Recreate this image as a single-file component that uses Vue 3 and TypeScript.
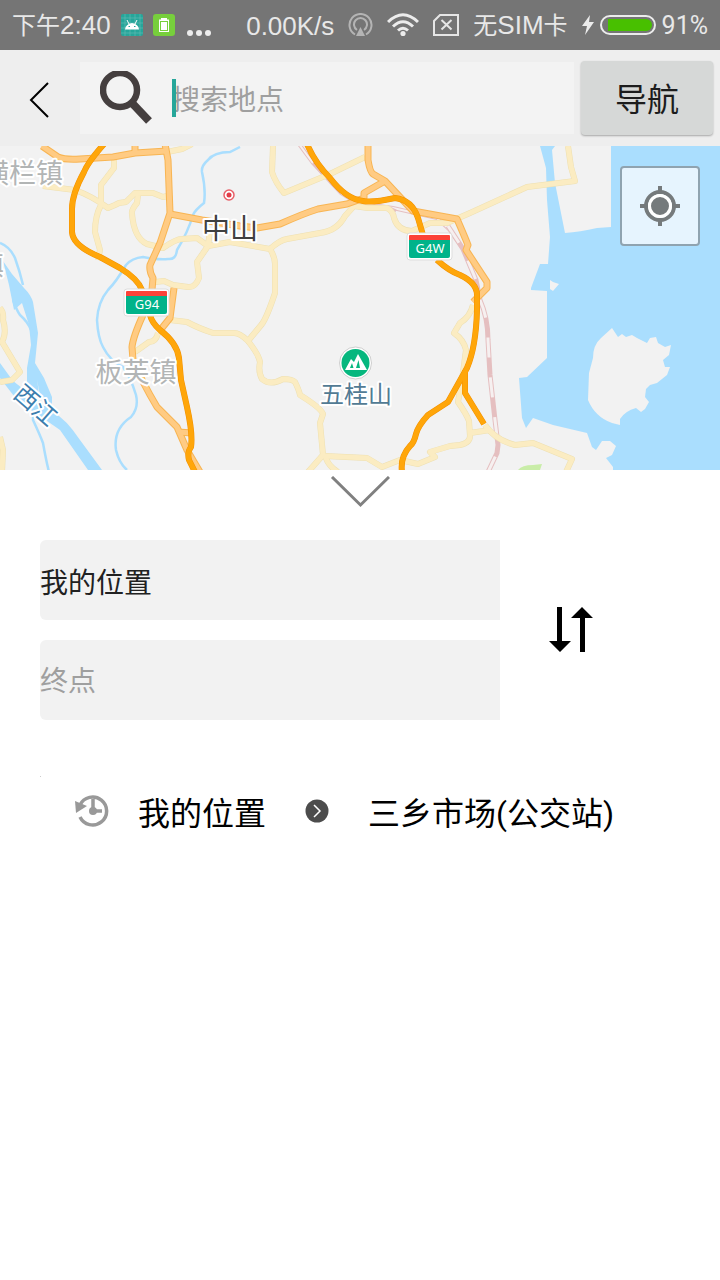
<script setup lang="ts">
import { ref } from 'vue'

interface Trip {
  from: string
  to: string
}

const query = ref('')
const origin = ref('我的位置')
const destination = ref('')
const trips = ref<Trip[]>([{ from: '我的位置', to: '三乡市场(公交站)' }])

function swapEnds(): void {
  const previous = origin.value
  origin.value = destination.value
  destination.value = previous
}

const rivers: string[] = [
  'M240 147L230 152Q214 152 208 160Q201 166 202 172Q206 190 204 203Q195 210 193 215Q188 232 177 250Q176 260 168 259Q158 260 143 257Q132 258 126 265Q116 282 108 290Q98 302 97 320Q98 338 103 347Q110 361 123 367Q131 378 136 395Q139 408 131 417Q113 429 116 450Q119 463 127 470',
  'M0 243Q10 247 15 258Q20 272 23 285',
  'M13 300Q17 311 20 315Q28 322 31 330',
  'M33 405L33 420Q40 435 43 443Q46 460 49 472',
]

const yellowRoads: string[] = [
  'M43 186L75 190Q92 196 108 208L115 205L119 203L126 202L135 193L153 193L163 197L172 195',
  'M114 158L114 168L101 185L101 205Q95 216 95 232L100 250L98 260',
  'M138 195L137 203Q131 210 132 214Q134 238 147 244L163 248Q176 239 182 239L197 238L208 246L230 242L270 249Q280 240 287 239L320 233Q337 231 345 216L354 206L368 208L387 208Q393 211 394 218Q398 231 412 231L430 223L447 223L470 213L527 187L575 181L571 167L568 146',
  'M210 230L208 246L197 262L199 278Q195 288 188 287L173 285L164 281L155 282',
  'M167 152L182 149L192 144',
  'M273 146L272 172Q275 182 284 193L330 174L365 157',
  'M270 249Q275 257 275 264L275 293Q267 317 262 324L248 341Q240 333 234 333L213 333Q198 328 187 322L170 320',
  'M248 341Q259 355 260 362Q258 372 262 379Q270 386 283 379Q292 379 295 382Q299 390 300 395Q321 408 323 414L320 423L323 455L308 472',
  'M325 455Q327 465 338 472',
  'M325 456L367 458L382 467L400 460L418 464L435 457L430 452L450 446L460 445Q470 443 470 436L469 421Q467 415 458 402L463 373L466 350Q464 340 454 333L460 323Q470 317 473 305',
  'M470 433L490 430',
  'M485 425Q495 440 515 445L533 443L572 459L566 472',
  'M0 308Q4 312 3 320Q7 333 2 342L20 372L12 380L0 382',
  'M0 437L3 450L2 472',
  'M158 333Q156 342 149 342L135 352',
]

const orangeRoads: string[] = [
  'M42 146L58 157Q65 160 80 159L113 157L135 153L167 151',
  'M135 144L135 153',
  'M165 144L168 160L170 213L160 243L150 265Q149 271 153 278L152 290',
  'M170 214L202 220L240 226L257 228L280 224Q305 213 318 209L347 204L364 198L364 193L385 181',
  'M368 144L368 160Q370 172 373 174L385 181L413 211L457 219Q464 235 468 245L466 250L487 282L487 288L473 302',
  'M174 288L170 318L162 328',
  'M143 315Q133 337 132 347L133 360Q142 382 157 407L177 427L187 450L200 472',
  'M178 432L192 433',
]

const highways: string[] = [
  'M104 144Q88 162 84 172Q72 194 72 209L72 232Q73 246 100 257L120 268Q138 279 142 290',
  'M150 315Q152 323 160 330Q177 343 179 358L181 380L187 407Q193 434 191 447Q187 452 189 460L195 472',
  'M307 144Q315 163 330 178Q346 199 363 201Q372 203 395 198Q412 200 418 218L423 235',
  'M437 260Q449 271 460 275Q477 283 477 295L477 310Q476 347 467 368L448 402Q431 413 428 415Q418 426 416 434Q414 443 410 446Q400 457 402 472',
  'M465 370L465 393L484 424',
]

const sea =
  'M540 146L543 157L546 168L547 200L550 237L548 264L540 264L531 288L531 290L547 291L547 358L527 377L519 378L522 418L526 428L533 418L553 425L587 433L592 447L596 450L602 441L610 441L616 446L612 455L606 458L613 467L613 470L900 470V0H540ZM611 146V227L597 228Q580 232 565 233L555 183L552 150L555 146V0H611Z'
const island =
  'M612 328L618 337L622 334L626 337L632 335L637 338L647 343L650 338L656 337L658 343L665 347L671 345L669 355L663 360L665 367L670 367L667 375L657 383L650 385L646 389L645 397L649 402L645 409L641 412L636 408Q625 411 620 419V425L612 423Q595 417 588 400L589 373L593 358Q593 345 601 338Z'
</script>

<template>
  <div class="app">
    <header class="status">
      <div class="status-group status-left">
        <span class="status-text"><span class="han">下午</span>2:40</span>
        <svg width="22" height="22" viewBox="0 0 22 22" aria-hidden="true">
          <rect width="22" height="22" rx="2" fill="#26a69a" />
          <path d="M4 0V22M9 0V22M14 0V22M19 0V22M0 4H22M0 9H22M0 14H22M0 19H22" stroke="#68bdb5" stroke-width=".6" />
          <path d="M4 15.500Q4.500 10 11 9Q17.500 10 18 15.500Z" fill="#fff" />
          <path d="M6 6L8 10M16 6L14 10" stroke="#fff" />
          <path d="M7.500 12.500H9M13 12.500H14.500" stroke="#26a69a" />
        </svg>
        <svg width="22" height="22" viewBox="0 0 22 22" aria-hidden="true">
          <rect width="22" height="22" rx="3" fill="#77cf3c" />
          <path d="M8 4H14V5.500H16V18H6V5.500H8Z" fill="#fff" />
          <rect x="7.500" y="7.500" width="7" height="9" fill="#fff" stroke="#77cf3c" />
        </svg>
        <svg class="more" width="24" height="22" viewBox="0 0 24 22" fill="#ececec" aria-hidden="true">
          <circle cx="3" cy="19" r="3" /><circle cx="12" cy="19" r="3" /><circle cx="21" cy="19" r="3" />
        </svg>
      </div>
      <div class="status-group status-right">
        <span class="status-text">0.00K/s</span>
        <svg width="25" height="24" viewBox="0 0 25 24" fill="none" stroke="#b4b4b4" stroke-width="2" aria-hidden="true">
          <path d="M7 21.500A11 11 0 1 1 18 21.500M9 17A6.500 6.500 0 1 1 16 17" />
          <path d="M12.500 14L17 23H8Z" fill="#b4b4b4" stroke="none" />
        </svg>
        <svg width="32" height="24" viewBox="0 0 32 24" fill="none" stroke="#ececec" stroke-width="3" aria-hidden="true">
          <path d="M1 9Q16 -5.500 31 9M6 13.500Q16 4 26 13.500M11 17.500Q16 13 21 17.500" />
          <circle cx="16" cy="20.500" r="2.600" fill="#ececec" stroke="none" />
        </svg>
        <svg width="26" height="22" viewBox="0 0 26 22" fill="none" stroke="#e6e6e6" stroke-width="2" aria-hidden="true">
          <path d="M7 1H25V21H1V7ZM8.500 6L18.500 15.500M18.500 6L8.500 15.500" />
        </svg>
        <span class="status-text"><span class="han">无</span>SIM<span class="han">卡</span></span>
        <div class="power">
          <svg width="12" height="20" viewBox="0 0 12 20" aria-hidden="true">
            <path d="M8 0L0 11H5L3 20L12 7H7Z" fill="#ececec" />
          </svg>
          <svg width="56" height="20" viewBox="0 0 56 20" aria-hidden="true">
            <rect x="1" y="1" width="54" height="18" rx="9" fill="none" stroke="#ececec" stroke-width="2" />
            <path d="M8 4H46A6 6 0 0 1 46 16H8Z" fill="#48c000" />
          </svg>
          <span class="percent">91%</span>
        </div>
      </div>
    </header>

    <form class="toolbar" @submit.prevent>
      <button class="back" type="button" aria-label="返回">
        <svg width="22" height="36" viewBox="0 0 22 36" fill="none" stroke="#000" stroke-width="2" aria-hidden="true">
          <path d="M19 1L2 18L19 35" />
        </svg>
      </button>
      <label class="search">
        <svg class="search-icon" width="52" height="55" viewBox="0 0 52 55" fill="none" stroke="#453f3f" aria-hidden="true">
          <circle cx="20" cy="19" r="17" stroke-width="6.500" />
          <path d="M32 32L49 50" stroke-width="8" />
        </svg>
        <input v-model="query" type="text" placeholder="搜索地点" aria-label="搜索地点" />
        <span class="caret"></span>
      </label>
      <button class="navigate" type="submit">导航</button>
    </form>

    <section class="map" aria-label="地图">
      <svg class="map-canvas" viewBox="0 146 720 324" preserveAspectRatio="xMidYMid slice">
        <rect y="146" width="720" height="324" fill="#f2f2f2" />
        <g fill="#aadefe">
          <path :d="sea" />
          <path d="M3 261L12 274L24 288Q31 295 33 302L38 333L35 363L44 378L52 397V404L40 395L37 380Q41 399 35 410L27 394L27 368L31 345L29 325L22 303L14 310L9 285Z" />
          <path d="M0 363L13 381L53 412Q66 419 80 440L102 470H88L60 430L17 400L0 378Z" />
        </g>
        <g fill="none" stroke="#aadefe" stroke-width="2.500">
          <path v-for="d in rivers" :key="d" :d="d" />
        </g>
        <path :d="island" fill="#f2f2f2" />
        <path d="M550 280L553 282L559 284L553 291L550 289Z" fill="#f2f2f2" />
        <path d="M518 470Q522 465 533 465L542 464L540 470Z" fill="#c9eda8" />

        <g fill="none">
          <path class="rail-edge thin" d="M299 144L313 163L341 193L357 203L393 208L437 218L450 230L463 249" />
          <path class="rail-core thin" d="M299 144L313 163L341 193L357 203L393 208L437 218L450 230L463 249" />
          <path d="M313 163L341 193M390 208L396 211" stroke="#e5bfc0" stroke-width="3" />
          <path class="rail-edge" d="M448 226L463 249L476 280L480 300Q488 318 488 340L490 375L495 420L498 445L497 453L488 472" />
          <path class="rail-core" d="M448 226L463 249L476 280L480 300Q488 318 488 340L490 375L495 420L498 445L497 453L488 472" />
        </g>
        <g class="roads yellow">
          <g class="casing"><path v-for="d in yellowRoads" :key="d" :d="d" /></g>
          <g class="surface"><path v-for="d in yellowRoads" :key="d" :d="d" /></g>
        </g>
        <g class="roads orange">
          <g class="casing"><path v-for="d in orangeRoads" :key="d" :d="d" /></g>
          <g class="surface"><path v-for="d in orangeRoads" :key="d" :d="d" /></g>
        </g>
        <g class="roads highway">
          <g class="casing"><path v-for="d in highways" :key="d" :d="d" /></g>
          <g class="surface"><path v-for="d in highways" :key="d" :d="d" /></g>
        </g>

        <g>
          <rect x="124" y="289" width="45" height="27" rx="3" fill="#fff" stroke="#ddd" />
          <path d="M126 297V292Q126 291 127 291H166Q167 291 167 292V297Z" fill="#fc4238" />
          <path d="M126 296H167V312Q167 314 165 314H128Q126 314 126 312Z" fill="#00b38a" />
          <text class="shield" x="147" y="309">G94</text>
          <rect x="407" y="233" width="45" height="27" rx="3" fill="#fff" stroke="#ddd" />
          <path d="M409 241V236Q409 235 410 235H449Q450 235 450 236V241Z" fill="#fc4238" />
          <path d="M409 240H450V256Q450 258 448 258H411Q409 258 409 256Z" fill="#00b38a" />
          <text class="shield" x="430" y="253">G4W</text>
        </g>
        <circle cx="229" cy="195" r="5" fill="#fff" stroke="#e85f68" stroke-width="1.500" />
        <circle cx="229" cy="195" r="2.500" fill="#e23c48" />
        <circle cx="355.500" cy="363" r="16" fill="#fff" stroke="#bbb" stroke-width=".7" />
        <circle cx="355.500" cy="363" r="14" fill="#06b77e" />
        <path d="M345 370L351 359L354 362L358 354L367 370Z" fill="#fff" />
        <path d="M352 363L353.500 368H350ZM358.500 360L360 368H356Z" fill="#06b77e" />

        <g class="place">
          <text class="town" x="63" y="183" text-anchor="end">横栏镇</text>
          <text class="town" x="4" y="275" text-anchor="end">镇</text>
          <text class="town" x="136" y="382" text-anchor="middle">板芙镇</text>
          <text class="city" x="230" y="239" text-anchor="middle">中山</text>
          <text class="scenic" x="356" y="403" text-anchor="middle">五桂山</text>
          <text class="river" transform="translate(36 405) rotate(41)" y="9" text-anchor="middle">西江</text>
        </g>
      </svg>
      <button class="locate" type="button" aria-label="定位">
        <svg width="40" height="40" viewBox="0 0 40 40" fill="none" stroke="#757a7c" stroke-width="4" aria-hidden="true">
          <path d="M20 0V6M20 34V40M0 20H6M34 20H40" />
          <circle cx="20" cy="20" r="14" />
          <circle cx="20" cy="20" r="10.500" fill="#757a7c" stroke="#fff" stroke-width="3" />
        </svg>
      </button>
    </section>

    <main class="panel">
      <button class="collapse" type="button" aria-label="收起">
        <svg width="60" height="34" viewBox="0 0 60 34" fill="none" stroke="#808080" stroke-width="3" aria-hidden="true">
          <path d="M2 1L30.500 29L59 1" />
        </svg>
      </button>

      <form class="route" @submit.prevent>
        <div class="ends">
          <input v-model="origin" type="text" placeholder="起点" aria-label="起点" />
          <input v-model="destination" type="text" placeholder="终点" aria-label="终点" />
        </div>
        <button class="swap" type="button" aria-label="交换起点和终点" @click="swapEnds">
          <svg width="44" height="46" viewBox="0 0 44 46" aria-hidden="true">
            <path d="M8 0H13V34H22L11 45L0 34H8ZM31 45V11H22L33 0L44 11H36V45Z" />
          </svg>
        </button>
      </form>

      <ul class="history">
        <li v-for="trip in trips" :key="trip.to">
          <button class="trip" type="button">
            <svg class="clock" width="34" height="34" viewBox="0 0 34 34" fill="none" stroke="#999" stroke-width="3.500" aria-hidden="true">
              <path d="M5 11A14 14 0 1 1 5 23" />
              <path d="M18 5V17H27" />
              <circle cx="18" cy="17" r="4" fill="#999" stroke="none" />
              <path d="M0 7L12 12L1 19Z" fill="#999" stroke="none" />
            </svg>
            <span>{{ trip.from }}</span>
            <svg class="arrow" width="24" height="24" viewBox="0 0 24 24" fill="none" aria-hidden="true">
              <circle cx="12" cy="12" r="11.500" fill="#4c4c4c" />
              <path d="M9 6L15 12L9 18" stroke="#fff" stroke-width="1.500" />
            </svg>
            <span>{{ trip.to }}</span>
          </button>
        </li>
      </ul>
    </main>
  </div>
</template>

<style>
body {
  margin: 0;
  background: #fff;
}
</style>

<style scoped>
.app {
  font-family: Roboto, 'Noto Sans CJK SC', sans-serif;
  color: #000;
}
svg {
  display: block;
  flex: none;
}
button {
  padding: 0;
  border: 0;
  background: none;
  font: inherit;
  color: inherit;
}
input {
  box-sizing: border-box;
  min-width: 0;
  padding: 2px 0 0;
  border: 0;
  outline: 0;
  background: none;
  font: inherit;
  font-size: 28px;
  color: #212121;
}
input::placeholder {
  color: #9f9f9f;
  opacity: 1;
}

.status {
  display: flex;
  justify-content: space-between;
  align-items: center;
  height: 50px;
  padding: 0 12px;
  background: #757575;
  color: #e8e8e8;
}
.status-group,
.power {
  display: flex;
  align-items: center;
}
.status-left {
  gap: 10px;
}
.more {
  margin-left: 2px;
}
.status-right {
  gap: 14px;
}
.power {
  gap: 6px;
}
.status-text {
  padding-top: 1px;
  font: 26px/30px 'Liberation Sans', 'Noto Sans CJK SC', sans-serif;
  white-space: nowrap;
}
.han {
  font-size: 24px;
}
.percent {
  padding-top: 2px;
  font-size: 25px;
  line-height: 30px;
}

.toolbar {
  display: flex;
  align-items: center;
  height: 96px;
  background: #eee;
}
.back {
  display: flex;
  justify-content: center;
  align-items: center;
  box-sizing: border-box;
  width: 80px;
  height: 96px;
  padding-top: 4px;
}
.search {
  position: relative;
  display: flex;
  flex: 1;
  align-items: center;
  height: 72px;
  padding-left: 20px;
  background: #f3f3f3;
}
.search input {
  flex: 1;
  height: 72px;
  margin-left: 20px;
  padding-top: 4px;
}
.caret {
  position: absolute;
  left: 92px;
  top: 17px;
  width: 4px;
  height: 38px;
  background: #26a69a;
}
.navigate {
  width: 132px;
  height: 74px;
  margin: 0 7px;
  padding-bottom: 2px;
  border-radius: 4px;
  background: #d6d8d7;
  box-shadow: 0 1px 2px rgba(0, 0, 0, 0.3);
  font-size: 32px;
  color: #1c1c1c;
}

.map {
  position: relative;
}
.map-canvas {
  width: 100%;
  height: 324px;
}
.locate {
  position: absolute;
  top: 20px;
  right: 20px;
  display: flex;
  justify-content: center;
  align-items: center;
  box-sizing: border-box;
  width: 80px;
  height: 80px;
  border: 2px solid #8fa3b0;
  border-radius: 4px;
  background: #e6f4fe;
}
.roads path {
  fill: none;
  stroke-linejoin: round;
}
.yellow .casing {
  stroke: #eee0b2;
  stroke-width: 6px;
}
.yellow .surface {
  stroke: #fbecc2;
  stroke-width: 5px;
}
.orange .casing {
  stroke: #f8b553;
  stroke-width: 7px;
}
.orange .surface {
  stroke: #ffcb83;
  stroke-width: 5px;
}
.highway .casing {
  stroke: #f29100;
  stroke-width: 6px;
}
.highway .surface {
  stroke: #ffa60a;
  stroke-width: 5px;
}
.rail-edge {
  stroke: #e5bfc0;
  stroke-width: 5px;
}
.rail-core {
  stroke: #f6f0f0;
  stroke-width: 3px;
  stroke-dasharray: 20px 20px;
}
.rail-edge.thin {
  stroke-width: 4px;
}
.rail-core.thin {
  stroke-width: 2px;
  stroke-dasharray: none;
}
.shield {
  fill: #fff;
  font-family: 'Noto Sans', sans-serif;
  font-size: 13px;
  text-anchor: middle;
}
.place text {
  font-family: 'Noto Sans CJK SC', sans-serif;
  stroke: #fff;
  stroke-width: 4px;
  stroke-linejoin: round;
  paint-order: stroke;
}
.place .town {
  font-size: 27px;
  fill: #b2b5b5;
}
.place .city {
  font-size: 28px;
  fill: #404040;
}
.place .scenic {
  font-size: 24px;
  fill: #527b94;
}
.place .river {
  font-size: 24px;
  fill: #3c7eae;
}

.collapse {
  display: flex;
  justify-content: center;
  width: 100%;
  height: 70px;
  padding-top: 6px;
}
.route {
  display: flex;
  align-items: center;
  padding: 0 78px 0 40px;
}
.ends {
  display: flex;
  flex: 1;
  flex-direction: column;
  gap: 20px;
}
.ends input {
  width: 100%;
  height: 80px;
  border-radius: 6px 0 0 6px;
  background: #f2f2f2;
}
.swap {
  display: flex;
  justify-content: center;
  align-items: center;
  width: 142px;
  height: 80px;
}
.history {
  margin: 56px 40px 0;
  padding: 0;
  list-style: none;
}
.history::before {
  content: '';
  display: block;
  width: 1px;
  height: 1px;
  background: #ccc;
}
.trip {
  display: flex;
  align-items: center;
  width: 100%;
  height: 67px;
  padding-left: 35px;
  font-size: 32px;
  white-space: nowrap;
}
.clock {
  margin-right: 29px;
}
.arrow {
  margin: 0 39px;
}
</style>
